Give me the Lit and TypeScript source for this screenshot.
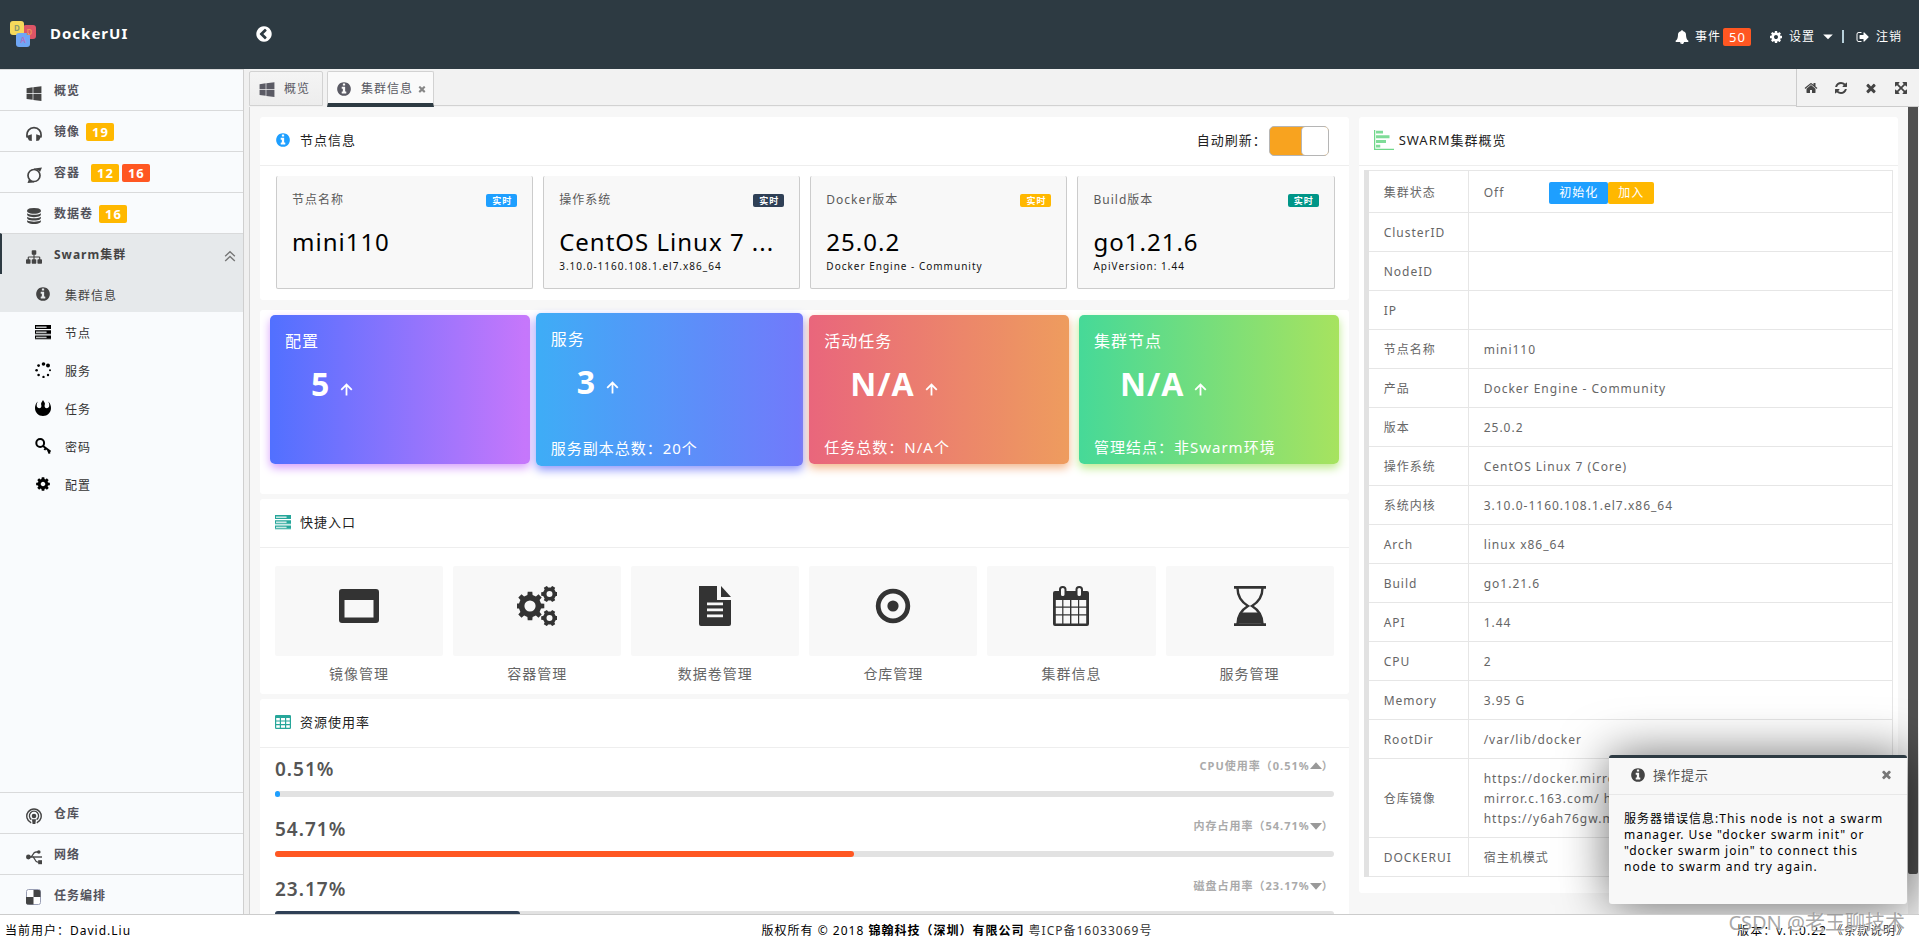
import { LitElement, html, svg, css, nothing } from "lit";
import { customElement, property } from "lit/decorators.js";
import { classMap } from "lit/directives/class-map.js";

/** Outline of a toothed wheel with a round hole, for the even-odd fill rule. */
function gear(cx: number, cy: number, r: number, teeth: number, hole: number): string {
  const pts: string[] = [];
  const step = (Math.PI * 2) / teeth;
  const inner = r * 0.78;
  for (let i = 0; i < teeth; i++) {
    const a = i * step;
    const parts: [number, number][] = [
      [inner, a - step * 0.3],
      [r, a - step * 0.2],
      [r, a + step * 0.2],
      [inner, a + step * 0.3],
    ];
    for (const [rad, ang] of parts) {
      pts.push(`${(cx + rad * Math.cos(ang)).toFixed(1)} ${(cy + rad * Math.sin(ang)).toFixed(1)}`);
    }
  }
  return `M${pts.join("L")}ZM${cx - hole} ${cy}a${hole} ${hole} 0 1 0 ${hole * 2} 0a${hole} ${hole} 0 1 0 ${-hole * 2} 0Z`;
}

const CIRCLE = "q0 209-103 385.5t-279.5 279.5-385.5 103-385.5-103-279.5-279.5-103-385.5 103-385.5 279.5-279.5 385.5-103 385.5 103 279.5 279.5 103 385.5z";

const glyphs: Record<string, string> = {
  windows: "M746 1006v651l-682-94v-557h682zm0-743v659h-682v-565zm982 743v786l-907-125v-661h907zm0-878v794h-907v-669z",
  info: "M1152 1376v-160q0-14-9-23t-23-9h-96v-512q0-14-9-23t-23-9h-320q-14 0-23 9t-9 23v160q0 14 9 23t23 9h96v320h-96q-14 0-23 9t-9 23v160q0 14 9 23t23 9h448q14 0 23-9t9-23zm-128-896v-160q0-14-9-23t-23-9h-192q-14 0-23 9t-9 23v160q0 14 9 23t23 9h192q14 0 23-9t9-23zm640 416" + CIRCLE,
  back: "M1037 1395l102-102q19-19 19-45t-19-45l-307-307 307-307q19-19 19-45t-19-45l-102-102q-19-19-45-19t-45 19l-454 454q-19 19-19 45t19 45l454 454q19 19 45 19t45-19zm627-499" + CIRCLE,
  cog: "M1152 896q0-106-75-181t-181-75-181 75-75 181 75 181 181 75 181-75 75-181zm512-109v222q0 12-8 23t-20 13l-185 28q-19 54-39 91 35 50 107 138 10 12 10 25t-9 23q-27 37-99 108t-94 71q-12 0-26-9l-138-108q-44 23-91 38-16 136-29 186-7 28-36 28h-222q-14 0-24.5-8.5t-11.5-21.5l-28-184q-49-16-90-37l-141 107q-10 9-25 9-14 0-25-11-126-114-165-168-7-10-7-23 0-12 8-23 15-21 51-66.5t54-70.5q-27-50-41-99l-183-27q-13-2-21-12.5t-8-23.5v-222q0-12 8-23t19-13l186-28q14-46 39-92-40-57-107-138-10-12-10-24 0-10 9-23 26-36 98.5-107.5t94.5-71.5q13 0 26 10l138 107q44-23 91-38 16-136 29-186 7-28 36-28h222q14 0 24.5 8.5t11.5 21.5l28 184q49 16 90 37l142-107q9-9 24-9 13 0 25 10 129 119 165 170 7 8 7 22 0 12-8 23-15 21-51 66.5t-54 70.5q26 50 41 98l183 28q13 2 21 12.5t8 23.5z",
  bell: "M912 1696q0-16-16-16-59 0-101.5-42.5t-42.5-101.5q0-16-16-16t-16 16q0 73 51.5 124.5t124.5 51.5q16 0 16-16zm816-288q0 52-38 90t-90 38h-448q0 106-75 181t-181 75-181-75-75-181h-448q-52 0-90-38t-38-90q50-42 91-88t85-119.5 74.5-158.5 50-206 19.5-260q0-152 117-282.5t307-158.5q-8-19-8-39 0-40 28-68t68-28 68 28 28 68q0 20-8 39 190 28 307 158.5t117 282.5q0 139 19.5 260t50 206 74.5 158.5 85 119.5 91 88z",
  logout: "M704 1440q0 4 1 20t.5 26.5-3 23.5-10 19.5-20.5 6.5h-320q-119 0-203.5-84.5t-84.5-203.5v-704q0-119 84.5-203.5t203.5-84.5h320q13 0 22.5 9.5t9.5 22.5q0 4 1 20t.5 26.5-3 23.5-10 19.5-20.5 6.5h-320q-66 0-113 47t-47 113v704q0 66 47 113t113 47h312l11.5 1 11.5 3 8 5.5 7 9 2 13.5zm928-544q0 26-19 45l-544 544q-19 19-45 19t-45-19-19-45v-288h-448q-26 0-45-19t-19-45v-384q0-26 19-45t45-19h448v-288q0-26 19-45t45-19 45 19l544 544q19 19 19 45z",
  home: "M1472 992v480q0 26-19 45t-45 19h-384v-384h-256v384h-384q-26 0-45-19t-19-45v-480q0-1 .5-3t.5-3l575-474 575 474q1 2 1 6zm223-69l-62 74q-8 9-21 11h-3q-13 0-21-7l-692-577-692 577q-12 8-24 7-13-2-21-11l-62-74q-8-10-7-23.5t11-21.5l719-599q32-26 76-26t76 26l244 204v-195q0-14 9-23t23-9h192q14 0 23 9t9 23v408l219 182q10 8 11 21.5t-7 23.5z",
  refresh: "M1639 1056q0 5-1 7-64 268-268 434.5t-478 166.5q-146 0-282.5-55t-243.5-157l-129 129q-19 19-45 19t-45-19-19-45v-448q0-26 19-45t45-19h448q26 0 45 19t19 45-19 45l-137 137q71 66 161 102t187 36q134 0 250-65t186-179q11-17 53-117 8-23 30-23h192q13 0 22.5 9.5t9.5 22.5zm25-800v448q0 26-19 45t-45 19h-448q-26 0-45-19t-19-45 19-45l138-138q-148-137-349-137-134 0-250 65t-186 179q-11 17-53 117-8 23-30 23h-199q-13 0-22.5-9.5t-9.5-22.5v-7q65-268 270-434.5t480-166.5q146 0 284 55.5t245 156.5l130-129q19-19 45-19t45 19 19 45z",
  times: "M1490 1322q0 40-28 68l-136 136q-28 28-68 28t-68-28l-294-294-294 294q-28 28-68 28t-68-28l-136-136q-28-28-28-68t28-68l294-294-294-294q-28-28-28-68t28-68l136-136q28-28 68-28t68 28l294 294 294-294q28-28 68-28t68 28l136 136q28 28 28 68t-28 68l-294 294 294 294q28 28 28 68z",
  expand: "M1411 541l-355 355 355 355 144-144q29-31 70-14 39 17 39 59v448q0 26-19 45t-45 19h-448q-42 0-59-40-17-39 14-69l144-144-355-355-355 355 144 144q31 30 14 69-17 40-59 40h-448q-26 0-45-19t-19-45v-448q0-42 40-59 39-17 69 14l144 144 355-355-355-355-144 144q-19 19-45 19-12 0-24-5-40-17-40-59v-448q0-26 19-45t45-19h448q42 0 59 40 17 39-14 69l-144 144 355 355 355-355-144-144q-31-30-14-69 17-40 59-40h448q26 0 45 19t19 45v448q0 42-39 59-13 5-25 5-26 0-45-19z",
  sitemap: "M1792 1248v320q0 40-28 68t-68 28h-320q-40 0-68-28t-28-68v-320q0-40 28-68t68-28h96v-192h-512v192h96q40 0 68 28t28 68v320q0 40-28 68t-68 28h-320q-40 0-68-28t-28-68v-320q0-40 28-68t68-28h96v-192h-512v192h96q40 0 68 28t28 68v320q0 40-28 68t-68 28h-320q-40 0-68-28t-28-68v-320q0-40 28-68t68-28h96v-192q0-52 38-90t90-38h512v-192h-96q-40 0-68-28t-28-68v-320q0-40 28-68t68-28h320q40 0 68 28t28 68v320q0 40-28 68t-68 28h-96v192h512q52 0 90 38t38 90v192h96q40 0 68 28t28 68z",
  database: "M896 768q237 0 443-43t325-127v170q0 69-103 128t-280 93.5-385 34.5-385-34.5-280-93.5-103-128v-170q119 84 325 127t443 43zm0 768q237 0 443-43t325-127v170q0 69-103 128t-280 93.5-385 34.5-385-34.5-280-93.5-103-128v-170q119 84 325 127t443 43zm0-384q237 0 443-43t325-127v170q0 69-103 128t-280 93.5-385 34.5-385-34.5-280-93.5-103-128v-170q119 84 325 127t443 43zm0-1152q208 0 385 34.5t280 93.5 103 128v128q0 69-103 128t-280 93.5-385 34.5-385-34.5-280-93.5-103-128v-128q0-69 103-128t280-93.5 385-34.5z",
};

const drawings: Record<string, unknown> = {
  headphones: svg`<path d="M1.2 11.5C-.2 5 4 1.6 8 1.6s8.200 3.400 6.800 9.900" fill="none" stroke="currentColor" stroke-width="1.700"/><path d="M.6 10l5.200-1.800v6.800L3 14.600zM15.400 10l-5.200-1.800v6.800l2.800-.4z"/>`,
  ring: svg`<circle cx="8" cy="8.500" r="6" fill="none" stroke="currentColor" stroke-width="1.700"/><path d="M8 1.600L16 .4l-2 4.600c-1.500-2-3.500-2.800-6-2.600zM8 15.400l-6.500.6L3 12c1.300 1.600 2.800 2.400 5 2.500z"/>`,
  podcast: svg`<g fill="none" stroke="currentColor"><path d="M5.200 14.800a7.200 7.200 0 1 1 5.600 0" stroke-width="1.400"/><path d="M5.400 11.600a4.600 4.600 0 1 1 5.200 0" stroke-width="1.300"/></g><circle cx="8" cy="8" r="2.300"/><path d="M6 11.200h4l-.6 4.800H6.600z"/>`,
  usb: svg`<circle cx="2.400" cy="8" r="2.400"/><path d="M2 7.300h14v1.400H2z"/><path d="M4.600 8C7 8 6.600 3 10 3h2M6.800 8c2 0 2 5.200 5 5.200h2" fill="none" stroke="currentColor" stroke-width="1.300"/><circle cx="12.800" cy="3" r="1.800"/><path d="M12.200 11.200h4v4h-4z"/>`,
  delicious: svg`<rect x=".5" y=".5" width="14" height="15" rx="2" fill="#fff" stroke="#9a9fb5"/><path d="M7.500 1H13a1.500 1.500 0 0 1 1.500 1.500V8h-7zM0 8h7.500v7.500H2A2 2 0 0 1 0 14z"/>`,
  server: svg`<path d="M0 1h16v1.400H0zM0 4h16v1H0zM0 6.200h16v1.400H0zM0 9.200h16v1H0zM0 11.400h16v1.300H0zM0 14.200h16v1H0z"/><path d="M0 2h1v2H0zM11.500 2H16v2h-4.500zM0 7h1v2.200H0zM11.500 7H16v2.200h-4.500zM0 12h1v2.200H0zM11.500 12H16v2.200h-4.500z"/><path d="M1 2.400h10.500V4H1zM1 7.600h10.500v1.600H1zM1 12.700h10.500v1.500H1z" opacity=".25"/>`,
  spinner: svg`<circle cx="8.500" cy="2" r="1.800"/><circle cx="13" cy="3.600" r="2"/><circle cx="15" cy="8.300" r="1"/><circle cx="13" cy="13" r="1.200"/><circle cx="8.500" cy="15" r="1.200"/><circle cx="3.600" cy="13" r="1.300"/><circle cx="1.600" cy="8.300" r="1.300"/><circle cx="3.600" cy="3.600" r="1.400"/>`,
  rebel: svg`<path d="M3 1.400C.8 3 0 5.600 0 8c0 4.600 3.600 8 8 8s8-3.400 8-8c0-2.400-.8-5-3-6.600 1.500 2 1.800 4.800.4 6.200-1.400 1.200-3.800.6-3.800-1.600 0-1.200.6-1.800.2-3L8 0 6.200 3c-.4 1.200.2 1.800.2 3 0 2.200-2.400 2.800-3.800 1.600C1.200 6.200 1.500 3.400 3 1.400z"/>`,
  key: svg`<g fill="none" stroke="currentColor" stroke-width="2"><circle cx="5.200" cy="5" r="3.900"/><path d="M8 8l7.600 5.600M10.600 10.200l-1.200 1.800M13 12l1.600 3.600"/></g>`,
  barchart: svg`<path d="M.5 0v15.500H16" fill="none" stroke="#6fd88a"/><path d="M1.600.6h5.600v2.200H1.600zM1.600 4.200h10.800v2.400H1.600zM1.600 8h8v2.400h-8zM1.600 11.800H5V14H1.600z" fill="#7fdc98"/>`,
  table: svg`<path fill-rule="evenodd" d="M1.200 1h13.600A1.200 1.200 0 0 1 16 2.200v11.600a1.200 1.200 0 0 1-1.200 1.200H1.200A1.200 1.200 0 0 1 0 13.800V2.200A1.200 1.200 0 0 1 1.200 1zM1.200 4v2.400h3.600V4zM6 4v2.400h4V4zM11.200 4v2.400h3.600V4zM1.200 7.600V10h3.600V7.600zM6 7.600V10h4V7.600zM11.200 7.600V10h3.600V7.600zM1.200 11.200v2.600h3.600v-2.600zM6 11.200v2.600h4v-2.600zM11.200 11.200v2.600h3.600v-2.600z"/>`,
  doubleup: svg`<path d="M2.500 8.200L8 3l5.500 5.200M2.500 13.700L8 8.500l5.500 5.200" fill="none" stroke="currentColor" stroke-width="1.600"/>`,
  arrowup: svg`<path d="M8 15.500V2.600M1.500 8.600L8 2l6.500 6.600" fill="none" stroke="currentColor" stroke-width="2.200"/>`,
  caretdown: svg`<path d="M2.500 5h11L8 10.500z"/>`,
  triup: svg`<path d="M0 12L8 3l8 9z"/>`,
  tridown: svg`<path d="M0 4h16l-8 9z"/>`,
};

const bigDrawings: Record<string, unknown> = {
  window: svg`<path fill-rule="evenodd" d="M3 3h34a3 3 0 0 1 3 3v28a3 3 0 0 1-3 3H3a3 3 0 0 1-3-3V6a3 3 0 0 1 3-3zM5.500 14v17.500h29V14z"/>`,
  gears: svg`<path fill-rule="evenodd" d="${gear(13, 20, 14.5, 8, 5.6)}"/><path fill-rule="evenodd" d="${gear(32.5, 8, 8.5, 6, 3)}"/><path fill-rule="evenodd" d="${gear(32.5, 32, 8.5, 6, 3)}"/>`,
  file: svg`<path fill-rule="evenodd" d="M4 0h18v14h14v24a2 2 0 0 1-2 2H6a2 2 0 0 1-2-2zM12 16.500v2.800h16v-2.800zM12 22.500v2.800h16v-2.800zM12 28.500v2.800h16v-2.800z"/><path d="M26 0v11h10z"/>`,
  target: svg`<circle cx="20" cy="20" r="14.800" fill="none" stroke="currentColor" stroke-width="4.800"/><circle cx="20" cy="20" r="5.600"/>`,
  calendar: svg`<path fill-rule="evenodd" d="M4 5h32a2 2 0 0 1 2 2v31a2 2 0 0 1-2 2H4a2 2 0 0 1-2-2V7a2 2 0 0 1 2-2zM4.800 14v6.500h6.400V14zM12.400 14v6.500H19V14zM20.400 14v6.500H27V14zM28.200 14v6.500h7V14zM4.800 21.700v6.600h6.400v-6.600zM12.400 21.700v6.600H19v-6.600zM20.400 21.700v6.600H27v-6.600zM28.200 21.700v6.600h7v-6.600zM4.800 29.500v8h6.400v-8zM12.400 29.500v8H19v-8zM20.400 29.500v8H27v-8zM28.200 29.500v8h7v-8z"/><g fill="#f8f8f8" stroke="currentColor" stroke-width="2"><rect x="9" y="1" width="5.500" height="10" rx="2.600"/><rect x="25.500" y="1" width="5.500" height="10" rx="2.600"/></g>`,
  hourglass: svg`<path d="M4 0h32v2.800H4zM4 37.200h32V40H4z"/><path d="M7.500 2c0 9 4 14 10.500 18C11.500 24 7.500 29 7.500 38M32.500 2c0 9-4 14-10.500 18 6.500 4 10.500 9 10.500 18" fill="none" stroke="currentColor" stroke-width="2.400"/><path d="M10.500 26.500h19c2 3 3 7 3 11h-25c0-4 1-8 3-11z"/>`,
};

@customElement("du-icon")
export class DuIcon extends LitElement {
  @property() name = "";

  static styles = css`
    :host {
      display: inline-flex;
      flex: none;
      width: 16px;
      height: 16px;
    }
    .glyph {
      width: 100%;
      height: 100%;
      fill: currentColor;
    }
  `;

  render() {
    if (glyphs[this.name]) {
      return html`<svg class="glyph" viewBox="0 0 1792 1792" aria-hidden="true"><path d=${glyphs[this.name]}></path></svg>`;
    }
    if (bigDrawings[this.name]) {
      return html`<svg class="glyph" viewBox="0 0 40 40" aria-hidden="true">${bigDrawings[this.name]}</svg>`;
    }
    return html`<svg class="glyph" viewBox="0 0 16 16" aria-hidden="true">${drawings[this.name] ?? nothing}</svg>`;
  }
}

interface NavItem {
  icon: string;
  label: string;
  badges?: { text: string; tone: string }[];
}

const topNav: NavItem[] = [
  { icon: "windows", label: "概览" },
  { icon: "headphones", label: "镜像", badges: [{ text: "19", tone: "amber" }] },
  { icon: "ring", label: "容器", badges: [{ text: "12", tone: "amber" }, { text: "16", tone: "red" }] },
  { icon: "database", label: "数据卷", badges: [{ text: "16", tone: "amber" }] },
];

const subNav: NavItem[] = [
  { icon: "info", label: "集群信息" },
  { icon: "server", label: "节点" },
  { icon: "spinner", label: "服务" },
  { icon: "rebel", label: "任务" },
  { icon: "key", label: "密码" },
  { icon: "cog", label: "配置" },
];

const bottomNav: NavItem[] = [
  { icon: "podcast", label: "仓库" },
  { icon: "usb", label: "网络" },
  { icon: "delicious", label: "任务编排" },
];

const nodeCards = [
  { label: "节点名称", tone: "blue", value: "mini110", note: "" },
  { label: "操作系统", tone: "navy", value: "CentOS Linux 7 ...", note: "3.10.0-1160.108.1.el7.x86_64" },
  { label: "Docker版本", tone: "amber", value: "25.0.2", note: "Docker Engine - Community" },
  { label: "Build版本", tone: "teal", value: "go1.21.6", note: "ApiVersion: 1.44" },
];

const statCards = [
  { tone: "violet", label: "配置", value: "5", note: "" },
  { tone: "sky", label: "服务", value: "3", note: "服务副本总数：20个" },
  { tone: "coral", label: "活动任务", value: "N/A", note: "任务总数：N/A个" },
  { tone: "green", label: "集群节点", value: "N/A", note: "管理结点：非Swarm环境" },
];

const shortcuts = [
  { icon: "window", label: "镜像管理" },
  { icon: "gears", label: "容器管理" },
  { icon: "file", label: "数据卷管理" },
  { icon: "target", label: "仓库管理" },
  { icon: "calendar", label: "集群信息" },
  { icon: "hourglass", label: "服务管理" },
];

const usages = [
  { tone: "blue", value: "0.51", label: "CPU使用率", trend: "triup" },
  { tone: "red", value: "54.71", label: "内存占用率", trend: "tridown" },
  { tone: "navy", value: "23.17", label: "磁盘占用率", trend: "tridown" },
];

const swarmRows: [string, string][] = [
  ["ClusterID", ""],
  ["NodeID", ""],
  ["IP", ""],
  ["节点名称", "mini110"],
  ["产品", "Docker Engine - Community"],
  ["版本", "25.0.2"],
  ["操作系统", "CentOS Linux 7 (Core)"],
  ["系统内核", "3.10.0-1160.108.1.el7.x86_64"],
  ["Arch", "linux x86_64"],
  ["Build", "go1.21.6"],
  ["API", "1.44"],
  ["CPU", "2"],
  ["Memory", "3.95 G"],
  ["RootDir", "/var/lib/docker"],
  ["仓库镜像", "https://docker.mirrors.ustc.edu.cn/ https://hub-mirror.c.163.com/ https://registry.docker-cn.com/ https://y6ah76gw.mirror.aliyuncs.com/"],
  ["DOCKERUI", "宿主机模式"],
];

@customElement("app-root")
export class AppRoot extends LitElement {
  static styles = css`
    :host {
      display: grid;
      grid-template-rows: 69px minmax(0, 1fr) 27px;
      height: 100vh;
      overflow: hidden;
      position: relative;
      background: #fff;
      color: #000;
      font: 12px/20px "Noto Sans", "Noto Sans CJK SC", sans-serif;
      letter-spacing: 1px;
    }
    * {
      box-sizing: border-box;
    }
    a {
      color: inherit;
      text-decoration: none;
    }
    button {
      border: 0;
      padding: 0;
      background: none;
      color: inherit;
      font: inherit;
      letter-spacing: inherit;
      cursor: pointer;
    }
    h1, h2, p, ul {
      margin: 0;
      padding: 0;
      list-style: none;
    }
    .blue { background: #1e9fff; }
    .navy { background: #2f4056; }
    .amber { background: #ffb800; }
    .teal { background: #009688; }
    .red { background: #ff5722; }

    /* top bar */
    .top {
      display: flex;
      align-items: center;
      background: #2d3a42;
      color: #fff;
    }
    .brand {
      display: flex;
      align-items: center;
      gap: 13px;
      width: 255px;
      padding-left: 10px;
    }
    .logo {
      width: 27px;
      height: 27px;
    }
    .brand-name {
      padding-bottom: 4px;
      font-size: 15px;
      font-weight: 700;
    }
    .collapse {
      display: flex;
      padding-bottom: 2px;
    }
    .collapse du-icon {
      width: 18px;
      height: 18px;
    }
    .user-menu {
      display: flex;
      align-items: center;
      margin-left: auto;
      padding: 4px 17px 0 0;
    }
    .user-menu du-icon {
      width: 14px;
      height: 14px;
    }
    .menu-link {
      display: flex;
      align-items: center;
      gap: 6px;
    }
    .count {
      padding: 0 5px 0 6px;
      margin-left: -4px;
      border-radius: 2px;
      font-size: 13px;
      line-height: 18px;
    }
    .settings {
      margin-left: 18px;
    }
    .logout {
      margin-left: 7px;
      padding-left: 14px;
      position: relative;
    }
    .logout::before {
      content: "";
      position: absolute;
      left: 0;
      top: 3px;
      width: 2px;
      height: 13px;
      background: #b7d0da;
    }

    /* body */
    .body {
      display: grid;
      grid-template-columns: 244px minmax(0, 1fr);
      position: relative;
      min-height: 0;
    }
    .side {
      display: flex;
      flex-direction: column;
      justify-content: space-between;
      background: #f9fbfd;
      border-right: 1px solid #cfcfcf;
      min-height: 0;
    }
    .nav-link {
      display: flex;
      align-items: center;
      height: 41px;
      padding: 2px 0 0 26px;
      border-top: 1px solid #d9dadb;
      color: #53535c;
      font-weight: 700;
    }
    .nav-link du-icon {
      margin: 3px 12px 0 0;
      color: #444;
    }
    .badge {
      margin-left: 3px;
      padding: 0 5px 0 6px;
      border-radius: 2px;
      color: #fff;
      font-size: 13px;
      font-weight: 700;
      line-height: 18px;
    }
    .badge:first-of-type {
      margin-left: 6px;
    }
    .nav-label.wide {
      margin-right: 5px;
    }
    .nav-link.open {
      border-left: 2px solid #2d3a42;
      padding: 2px 6px 0 24px;
      background: #e6e9eb;
      color: #444;
    }
    .nav-link.open .fold {
      width: 14px;
      height: 14px;
      margin: 2px 0 0 auto;
      color: #777;
    }
    .sub-link {
      display: flex;
      align-items: center;
      gap: 14px;
      height: 38px;
      padding: 6px 0 0 35px;
      color: #333;
    }
    .sub-link du-icon {
      width: 16px;
      margin-bottom: 4px;
      color: #000;
    }
    .sub-link.current {
      background: #e6e9eb;
      color: #444;
    }
    .sub-link.current du-icon {
      color: #444;
    }
    .bottom-nav .last {
      height: 40px;
    }

    /* tabs */
    .content {
      display: grid;
      grid-template-rows: 38px minmax(0, 1fr);
      min-width: 0;
      min-height: 0;
      padding-left: 5px;
      background: #f0f0f0;
    }
    .tabs {
      display: flex;
      background: #f2f2f2;
    }
    .tab {
      display: flex;
      align-items: center;
      gap: 9px;
      height: 35px;
      margin: 2px 4px 0 0;
      padding: 0 12px 0 9px;
      border: 1px solid #d2d2d2;
      border-radius: 2px 2px 0 0;
      color: #5a5a64;
      background: linear-gradient(#f4f4f4, #ededed);
    }
    .tab.active {
      gap: 9px;
      height: 36px;
      margin-right: 0;
      padding: 2px 6px 0 8px;
      background: #fafafa;
      border-bottom: 4px solid #2d3a42;
    }
    .tab .close {
      display: flex;
      margin-left: -5px;
    }
    .tab .close du-icon {
      width: 10px;
      height: 10px;
      color: #888;
    }
    .tab-fill {
      flex: 1;
      height: 37px;
      border-bottom: 1px solid #d2d2d2;
    }
    .tools {
      display: flex;
      align-items: center;
      justify-content: space-between;
      width: 123px;
      padding: 0 11px 0 7px;
      border-left: 1px solid #ccc;
      border-bottom: 1px solid #ccc;
      color: #444;
    }
    .tools button {
      display: flex;
    }
    .tools du-icon {
      width: 14px;
      height: 14px;
    }

    /* workspace */
    .workspace {
      display: grid;
      grid-template-columns: minmax(0, 1fr) 10px;
      padding-right: 1px;
      border-left: 1px solid #d2d2d2;
      background: #f7f7f7;
      overflow: hidden;
      min-height: 0;
    }
    .columns {
      display: grid;
      grid-template-columns: repeat(12, minmax(0, 1fr));
      align-items: start;
      gap: 10px;
      padding: 10px;
      height: 100%;
      overflow: hidden;
    }
    .scroll-track {
      background: #ececec;
      min-height: 0;
    }
    .scroll-thumb {
      height: 95%;
      background: #505050;
      border-radius: 0 0 2px 2px;
    }
    .main-col {
      grid-column: span 8;
    }
    .side-col {
      grid-column: span 4;
    }
    .panel {
      margin-bottom: 5px;
      background: #fff;
      border-radius: 3px;
    }
    .panel.first {
      margin-bottom: 10px;
    }
    .panel-head {
      display: flex;
      align-items: center;
      gap: 9px;
      height: 49px;
      padding: 0 20px 2px 15px;
      border-bottom: 1px solid #eee;
      color: #222;
      font-size: 13px;
    }
    .panel-head h2 {
      font: inherit;
    }
    .panel-head.tail {
      gap: 5px;
    }
    .panel-head .ico-blue { color: #1e9fff; }
    .panel-head .ico-teal { color: #26a69a; }
    .panel-head .chart {
      width: 20px;
      height: 20px;
    }
    .auto {
      display: flex;
      align-items: center;
      margin-left: auto;
    }
    .switch {
      appearance: none;
      display: flex;
      justify-content: flex-end;
      width: 60px;
      height: 30px;
      margin: 2px 0 0 2px;
      border: 1px solid #b5b5b5;
      border-radius: 5px;
      background: #f8a31f;
    }
    .switch::after {
      content: "";
      width: 26px;
      height: 28px;
      border-left: 1px solid #b5b5b5;
      border-radius: 4px;
      background: #fff;
    }
    .node-grid {
      display: grid;
      grid-template-columns: repeat(4, minmax(0, 1fr));
      gap: 10px;
      padding: 10px 14px 11px 16px;
    }
    .node-card {
      height: 113px;
      padding: 14px 15px 0;
      background: #f8f8f8;
      border: 1px solid #ccc;
      border-top: 0;
      border-radius: 2px;
    }
    .node-head {
      display: flex;
      justify-content: space-between;
      align-items: center;
      color: #5a5a5a;
    }
    .live {
      padding: 0 5px 0 6px;
      border-radius: 2px;
      color: #fff;
      font-size: 9px;
      font-weight: 700;
      line-height: 13px;
    }
    .node-value {
      padding-top: 15px;
      font-size: 24px;
      line-height: 34px;
      white-space: nowrap;
    }
    .node-note {
      font-size: 10px;
      line-height: 14px;
      color: #111;
    }
    .stat-grid {
      display: grid;
      grid-template-columns: repeat(4, minmax(0, 1fr));
      gap: 10px;
      padding: 5px 10px 30px;
    }
    .stat {
      display: flex;
      flex-direction: column;
      height: 149px;
      padding: 14px 15px 5px;
      border-radius: 5px;
      color: #fff;
    }
    .violet {
      background: linear-gradient(90deg, #5170ff, #c877fb);
      box-shadow: 0 4px 10px #d7a0fb;
    }
    .sky {
      height: 153px;
      margin: -2px -4px;
      padding-bottom: 6px;
      background: linear-gradient(90deg, #3eadf6, #7279fb);
      box-shadow: 0 4px 10px #8f96fb;
    }
    .coral {
      background: linear-gradient(90deg, #e9667c, #ee9c5e);
      box-shadow: 0 4px 10px #f3b78c;
    }
    .green {
      background: linear-gradient(90deg, #46d998, #a7e35f);
      box-shadow: 0 4px 10px #bdea8c;
    }
    .stat-label {
      font-size: 16px;
      line-height: 24px;
    }
    .stat-value {
      display: flex;
      align-items: baseline;
      gap: 10px;
      padding: 9px 0 0 26px;
      font-size: 32px;
      font-weight: 700;
      line-height: 44px;
    }
    .stat-value du-icon {
      width: 13px;
      height: 13px;
    }
    .stat-note {
      margin-top: auto;
      font-size: 15px;
      line-height: 24px;
    }
    .short-grid {
      display: grid;
      grid-template-columns: repeat(6, minmax(0, 1fr));
      gap: 10px;
      padding: 18px 15px 10px;
    }
    .short {
      color: #666;
      font-size: 14px;
      line-height: 20px;
      text-align: center;
    }
    .short-tile {
      display: flex;
      justify-content: center;
      height: 90px;
      margin-bottom: 8px;
      padding-top: 20px;
      border-radius: 2px;
      background: #f8f8f8;
      color: #333;
    }
    .short-tile du-icon {
      width: 40px;
      height: 40px;
    }
    .usage-list {
      padding: 8px 15px 0;
    }
    .usage {
      height: 60px;
    }
    .usage-text {
      display: flex;
      justify-content: space-between;
      height: 35px;
    }
    .usage-value {
      color: #555;
      font-size: 19px;
      font-weight: 600;
      line-height: 26px;
    }
    .usage-label {
      display: flex;
      align-items: center;
      height: 20px;
      color: #aaa;
      font-size: 11px;
      font-weight: 700;
    }
    .usage-label du-icon {
      width: 12px;
      height: 12px;
      color: #999;
    }
    .bar {
      height: 6px;
      border-radius: 3px;
      background: #e2e2e2;
    }
    .fill {
      height: 6px;
      border-radius: 3px;
    }

    /* swarm table */
    .table-box {
      padding: 4px 5px 16px;
    }
    .swarm {
      width: 100%;
      border-collapse: collapse;
      table-layout: fixed;
      border: 1px solid #e6e6e6;
      border-left: 5px solid #e2e2e2;
      color: #666;
    }
    .swarm th,
    .swarm td {
      height: 39px;
      padding: 10px 15px 8px;
      border: 1px solid #e6e6e6;
      font-weight: 400;
      text-align: left;
    }
    .swarm th {
      width: 102px;
      padding-right: 0;
    }
    .swarm .status-row th,
    .swarm .status-row td {
      height: 42px;
    }
    .status {
      display: flex;
      align-items: center;
    }
    .actions {
      display: flex;
      margin-left: 45px;
    }
    .action {
      height: 22px;
      padding: 0 10px;
      border-radius: 2px;
      color: #fff;
    }

    /* toast */
    .toast {
      position: absolute;
      right: 12px;
      bottom: 10px;
      z-index: 2;
      width: 298px;
      height: 149px;
      border-top: 3px solid #2d3a42;
      border-radius: 3px;
      background: #f8f8f8;
      box-shadow: 1px 1px 50px rgba(0, 0, 0, 0.6);
    }
    .toast-head {
      display: flex;
      align-items: center;
      gap: 7px;
      height: 37px;
      padding: 0 14px 3px 21px;
      border-bottom: 1px solid #e8e8e8;
      color: #555;
      font-size: 13px;
    }
    .toast-head du-icon {
      color: #444;
    }
    .toast-head button {
      display: flex;
      margin-left: auto;
    }
    .toast-head button du-icon {
      width: 13px;
      height: 13px;
      color: #777;
    }
    .toast-text {
      padding: 16px 15px;
      line-height: 16px;
    }

    /* footer */
    .foot {
      display: grid;
      grid-template-columns: 1fr auto 1fr;
      align-items: center;
      position: relative;
      z-index: 3;
      padding: 6px 10px 0 5px;
      border-top: 1px solid #ccc;
      background: #fff;
    }
    .foot a {
      color: #333;
    }
    .foot .version {
      text-align: right;
    }
    .watermark {
      position: absolute;
      right: 14px;
      bottom: 4px;
      z-index: 4;
      color: rgba(140, 140, 140, 0.75);
      font-size: 20px;
      line-height: 28px;
      letter-spacing: 0;
      text-shadow: 1px 1px 0 rgba(255, 255, 255, 0.7);
    }
  `;

  private navLink(item: NavItem, last = false) {
    return html`<li>
      <a class=${classMap({ "nav-link": true, last })} href="#">
        <du-icon name=${item.icon}></du-icon>
        <span class=${classMap({ "nav-label": true, wide: (item.badges?.length ?? 0) > 1 })}>${item.label}</span>
        ${item.badges?.map((b) => html`<b class="badge ${b.tone}">${b.text}</b>`)}
      </a>
    </li>`;
  }

  private header() {
    return html`<header class="top">
      <div class="brand">
        <svg class="logo" viewBox="0 0 27 27" aria-hidden="true">
          <rect x="13" y="4" width="13" height="14" rx="3" fill="#dd5566"></rect>
          <rect x="0" y="0" width="14" height="14" rx="3" fill="#f6d95b"></rect>
          <rect x="6" y="12" width="14" height="14" rx="3" fill="#6fa6f5"></rect>
          <text x="7" y="10" text-anchor="middle" font-size="8" font-weight="700" fill="#8a9a70" letter-spacing="0">D</text>
          <text x="19.500" y="14" text-anchor="middle" font-size="8" font-weight="700" fill="#f08a5a" letter-spacing="0">D</text>
          <text x="13" y="22" text-anchor="middle" font-size="8" font-weight="700" fill="#a878c8" letter-spacing="0">A</text>
        </svg>
        <h1 class="brand-name">DockerUI</h1>
      </div>
      <button class="collapse" aria-label="收起菜单"><du-icon name="back"></du-icon></button>
      <nav class="user-menu">
        <a class="menu-link" href="#"><du-icon name="bell"></du-icon>事件 <span class="count red">50</span></a>
        <a class="menu-link settings" href="#"><du-icon name="cog"></du-icon>设置 <du-icon name="caretdown"></du-icon></a>
        <a class="menu-link logout" href="#"><du-icon name="logout"></du-icon>注销</a>
      </nav>
    </header>`;
  }

  private sidebar() {
    return html`<nav class="side">
      <ul>
        ${topNav.map((n) => this.navLink(n))}
        <li>
          <a class="nav-link open" href="#">
            <du-icon name="sitemap"></du-icon><span>Swarm集群</span><du-icon class="fold" name="doubleup"></du-icon>
          </a>
          <ul>
            ${subNav.map(
              (n, i) => html`<li>
                <a class=${classMap({ "sub-link": true, current: i === 0 })} href="#"><du-icon name=${n.icon}></du-icon>${n.label}</a>
              </li>`
            )}
          </ul>
        </li>
      </ul>
      <ul class="bottom-nav">
        ${bottomNav.map((n, i) => this.navLink(n, i === bottomNav.length - 1))}
      </ul>
    </nav>`;
  }

  private tabBar() {
    return html`<div class="tabs">
      <a class="tab" href="#"><du-icon name="windows"></du-icon>概览</a>
      <div class="tab active">
        <du-icon name="info"></du-icon><span>集群信息</span>
        <button class="close" aria-label="关闭"><du-icon name="times"></du-icon></button>
      </div>
      <div class="tab-fill"></div>
      <div class="tools">
        ${["home", "refresh", "times", "expand"].map((n) => html`<button aria-label=${n}><du-icon name=${n}></du-icon></button>`)}
      </div>
    </div>`;
  }

  private mainColumn() {
    return html`<div class="main-col">
      <section class="panel first">
        <div class="panel-head">
          <du-icon class="ico-blue" name="info"></du-icon>
          <h2>节点信息</h2>
          <label class="auto">自动刷新：<input class="switch" type="checkbox" checked /></label>
        </div>
        <div class="node-grid">
          ${nodeCards.map(
            (c) => html`<article class="node-card">
              <div class="node-head"><span>${c.label}</span><span class="live ${c.tone}">实时</span></div>
              <p class="node-value">${c.value}</p>
              <p class="node-note">${c.note}</p>
            </article>`
          )}
        </div>
      </section>
      <section class="panel">
        <div class="stat-grid">
          ${statCards.map(
            (c) => html`<article class="stat ${c.tone}">
              <p class="stat-label">${c.label}</p>
              <p class="stat-value">${c.value}<du-icon name="arrowup"></du-icon></p>
              <p class="stat-note">${c.note}</p>
            </article>`
          )}
        </div>
      </section>
      <section class="panel">
        <div class="panel-head"><du-icon class="ico-teal" name="server"></du-icon><h2>快捷入口</h2></div>
        <div class="short-grid">
          ${shortcuts.map(
            (s) => html`<a class="short" href="#"><div class="short-tile"><du-icon name=${s.icon}></du-icon></div>${s.label}</a>`
          )}
        </div>
      </section>
      <section class="panel">
        <div class="panel-head"><du-icon class="ico-teal" name="table"></du-icon><h2>资源使用率</h2></div>
        <div class="usage-list">
          ${usages.map(
            (u) => html`<div class="usage">
              <div class="usage-text">
                <span class="usage-value">${u.value}%</span>
                <span class="usage-label">${u.label}（${u.value}%<du-icon name=${u.trend}></du-icon>）</span>
              </div>
              <div class="bar"><div class="fill ${u.tone}" style="width:${u.value}%"></div></div>
            </div>`
          )}
        </div>
      </section>
    </div>`;
  }

  private sideColumn() {
    return html`<section class="panel side-col">
      <div class="panel-head tail"><du-icon class="chart" name="barchart"></du-icon><h2>SWARM集群概览</h2></div>
      <div class="table-box">
        <table class="swarm">
          <tbody>
            <tr class="status-row">
              <th scope="row">集群状态</th>
              <td>
                <div class="status">
                  Off
                  <div class="actions">
                    <button class="action blue">初始化</button>
                    <button class="action amber">加入</button>
                  </div>
                </div>
              </td>
            </tr>
            ${swarmRows.map(([k, v]) => html`<tr><th scope="row">${k}</th><td>${v}</td></tr>`)}
          </tbody>
        </table>
      </div>
    </section>`;
  }

  private toast() {
    return html`<aside class="toast" role="alert">
      <div class="toast-head">
        <du-icon name="info"></du-icon><span>操作提示</span>
        <button aria-label="关闭"><du-icon name="times"></du-icon></button>
      </div>
      <p class="toast-text">服务器错误信息:This node is not a swarm manager. Use "docker swarm init" or "docker swarm join" to connect this node to swarm and try again.</p>
    </aside>`;
  }

  render() {
    return html`
      ${this.header()}
      <div class="body">
        ${this.sidebar()}
        <main class="content">
          ${this.tabBar()}
          <div class="workspace">
            <div class="columns">${this.mainColumn()}${this.sideColumn()}</div>
            <div class="scroll-track"><div class="scroll-thumb"></div></div>
          </div>
        </main>
        ${this.toast()}
      </div>
      <footer class="foot">
        <span>当前用户：David.Liu</span>
        <span>版权所有 © 2018 <b>锦翰科技（深圳）有限公司</b> <a href="#">粤ICP备16033069号</a></span>
        <span class="version">版本：v.1.0.22 <a href="#">《条款说明》</a></span>
      </footer>
      <span class="watermark">CSDN @老王聊技术</span>
    `;
  }
}
